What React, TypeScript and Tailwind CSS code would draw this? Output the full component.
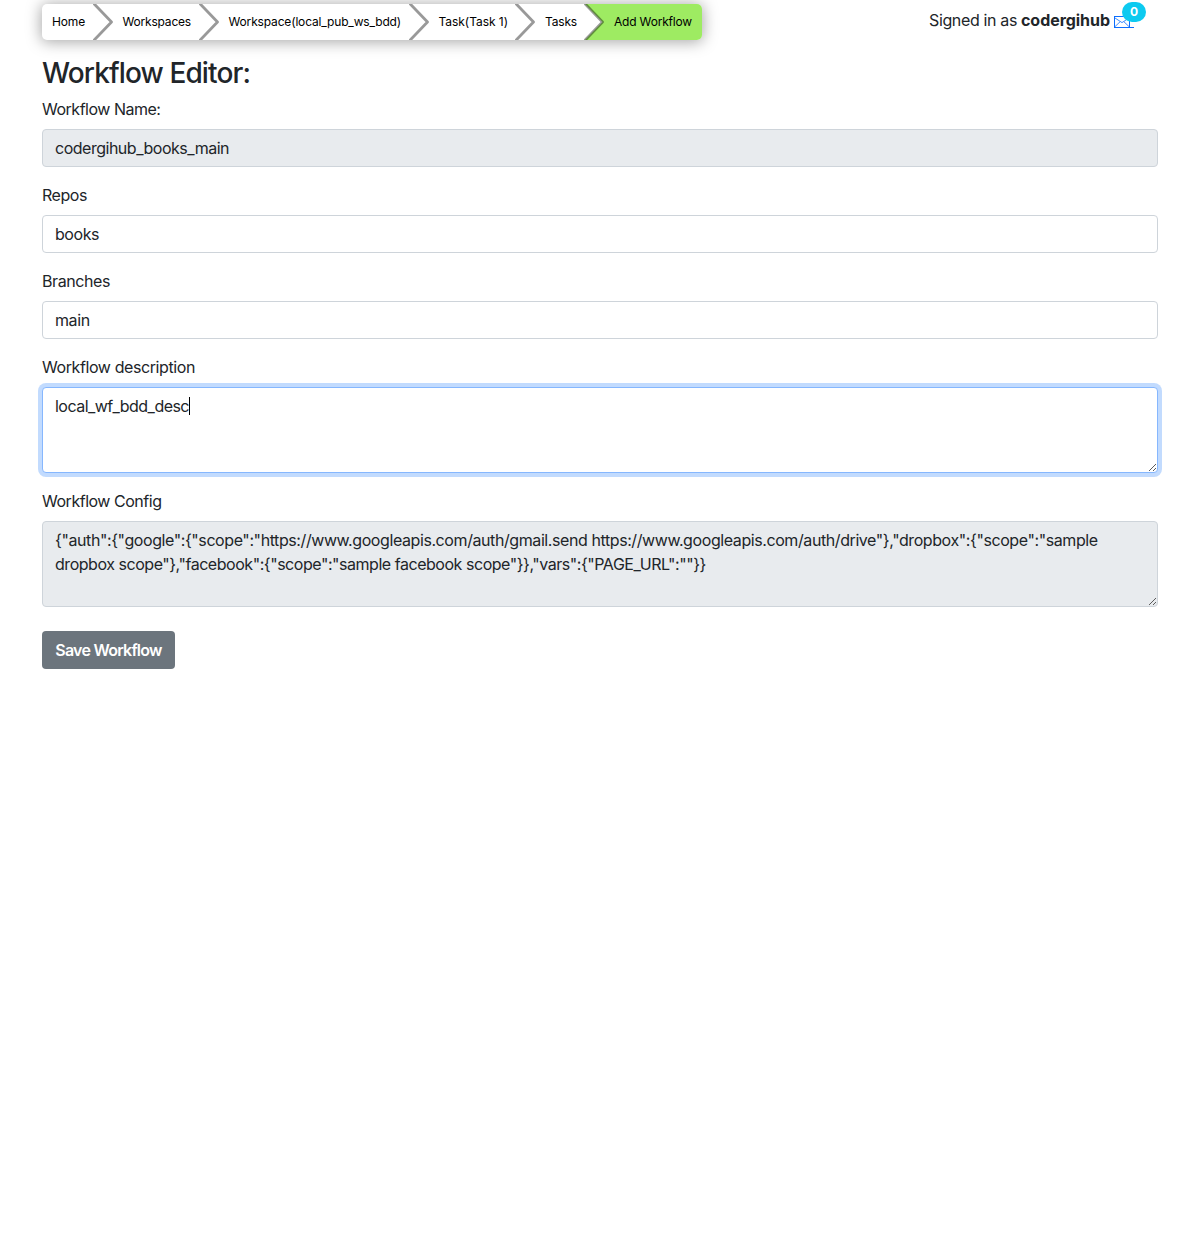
import React from "react";

const crumbs = [
  { label: "Home", width: "w-[70.5px]", spacing: "tracking-[-0.156px]" },
  { label: "Workspaces", width: "w-[106px]", spacing: "tracking-[-0.194px]" },
  { label: "Workspace(local_pub_ws_bdd)", width: "w-[210px]", spacing: "tracking-[-0.159px]" },
  { label: "Task(Task 1)", width: "w-[106.5px]", spacing: "tracking-[-0.047px]" },
  { label: "Tasks", width: "w-[69px]", spacing: "tracking-[-0.172px]" },
];

function Chevron({ last }: { last: boolean }) {
  return (
    <svg width="20" height="36" viewBox="0 0 20 36" className="ml-auto shrink-0">
      <rect width="20" height="36" fill={last ? "#9eeb62" : "#ffffff"} />
      <path d="M0 0H1L18.5 18L1 36H0Z" fill="#ffffff" />
      <path d="M0.3 -1L18.5 18L0.3 37" fill="none" stroke="#000000" strokeOpacity="0.4" strokeWidth="2.8" strokeLinejoin="round" />
    </svg>
  );
}

function Breadcrumb() {
  return (
    <nav className="flex h-9 w-[660px] overflow-visible rounded-[5px] bg-white text-xs text-black shadow-[0_1px_15px_1px_rgba(0,0,0,0.35)]">
      {crumbs.map((c, i) => (
        <a key={c.label} className={`flex shrink-0 items-center whitespace-nowrap pl-[10px] ${c.width} ${c.spacing}`}>
          {c.label}
          <Chevron last={i === crumbs.length - 1} />
        </a>
      ))}
      <a className="flex flex-1 items-center whitespace-nowrap rounded-r-[5px] bg-[#9eeb62] pl-[10px] tracking-[-0.184px]">
        Add Workflow
      </a>
    </nav>
  );
}

function Grip() {
  return (
    <svg width="9" height="9" viewBox="0 0 9 9" shapeRendering="crispEdges" className="absolute right-[1px] bottom-[1px]">
      <path d="M1 8L8 1M5 8L8 5" stroke="#5c5c5c" strokeWidth="1" />
    </svg>
  );
}

function Label({ children, spacing }: { children: React.ReactNode; spacing: string }) {
  return <label className={`mb-2 block h-6 ${spacing}`}>{children}</label>;
}

const control = "block w-full rounded border px-3 py-[6px] leading-6 outline-none";

export default function App() {
  return (
    <div className="h-[1250px] overflow-hidden bg-white px-[42px] pt-1 font-['Inter',sans-serif] text-base leading-6 text-[#212529]">
      <header className="flex h-9 justify-between">
        <Breadcrumb />
        <div className="mr-6 flex h-8 items-center whitespace-nowrap">
          <span className="tracking-[-0.358px]">Signed in as</span>
          <strong className="ml-1 font-bold tracking-[-0.042px]">codergihub</strong>
          <span className="relative ml-1 h-6 w-5">
            <svg width="20" height="13" viewBox="0 0 20 13" fill="none" stroke="#0d6efd" className="absolute top-[7px] left-0">
              <rect x="0.5" y="1.5" width="15" height="11" strokeWidth="1" />
              <path d="M1 3L8 7.6L15 3M1 11.6L6 6.8M15 11.6L10 6.8" strokeWidth="0.8" />
              <path d="M16 12.5H20" />
            </svg>
            <span className="absolute -top-[6px] left-2 flex h-5 w-6 items-center justify-center rounded-full bg-[#0dcaf0] text-xs font-bold text-white">
              0
            </span>
          </span>
        </div>
      </header>
      <main>
        <h3 className="mt-[17px] mb-[7px] h-[33px] text-[28px] leading-[33.6px] font-medium tracking-[-0.878px]">Workflow Editor:</h3>
        <Label spacing="tracking-[-0.485px]">Workflow Name:</Label>
        <input readOnly value="codergihub_books_main" className={`${control} mb-4 h-[38px] border-[#ced4da] bg-[#e8ebee] tracking-[-0.487px]`} />
        <Label spacing="tracking-[-0.447px]">Repos</Label>
        <input readOnly value="books" className={`${control} mb-4 h-[38px] border-[#ced4da] bg-white tracking-[-0.444px]`} />
        <Label spacing="tracking-[-0.414px]">Branches</Label>
        <input readOnly value="main" className={`${control} mb-4 h-[38px] border-[#ced4da] bg-white tracking-[-0.4px]`} />
        <Label spacing="tracking-[-0.405px]">Workflow description</Label>
        <div className="relative mb-4 h-[86px]">
          <textarea
            readOnly
            value="local_wf_bdd_desc"
            className={`${control} h-[86px] resize-none border-[#86b7fe] bg-white tracking-[-0.527px] shadow-[0_0_0_4px_rgba(13,110,253,0.25)]`}
          />
          <span className="absolute top-[10px] left-[147px] h-[18px] w-px bg-black" />
          <Grip />
        </div>
        <Label spacing="tracking-[-0.476px]">Workflow Config</Label>
        <div className="relative mb-6 h-[86px]">
          <div className={`${control} h-[86px] border-[#ced4da] bg-[#e8ebee] whitespace-nowrap`}>
            <p className="tracking-[-0.414px]">
              {'{"auth":{"google":{"scope":"https://www.googleapis.com/auth/gmail.send https://www.googleapis.com/auth/drive"},"dropbox":{"scope":"sample'}
            </p>
            <p className="tracking-[-0.462px]">
              {'dropbox scope"},"facebook":{"scope":"sample facebook scope"}},"vars":{"PAGE_URL":""}}'}
            </p>
          </div>
          <Grip />
        </div>
        <button className="h-[38px] w-[133px] rounded bg-[#6c757d] text-center font-semibold whitespace-nowrap text-white tracking-[-0.75px]">
          Save Workflow
        </button>
      </main>
    </div>
  );
}
